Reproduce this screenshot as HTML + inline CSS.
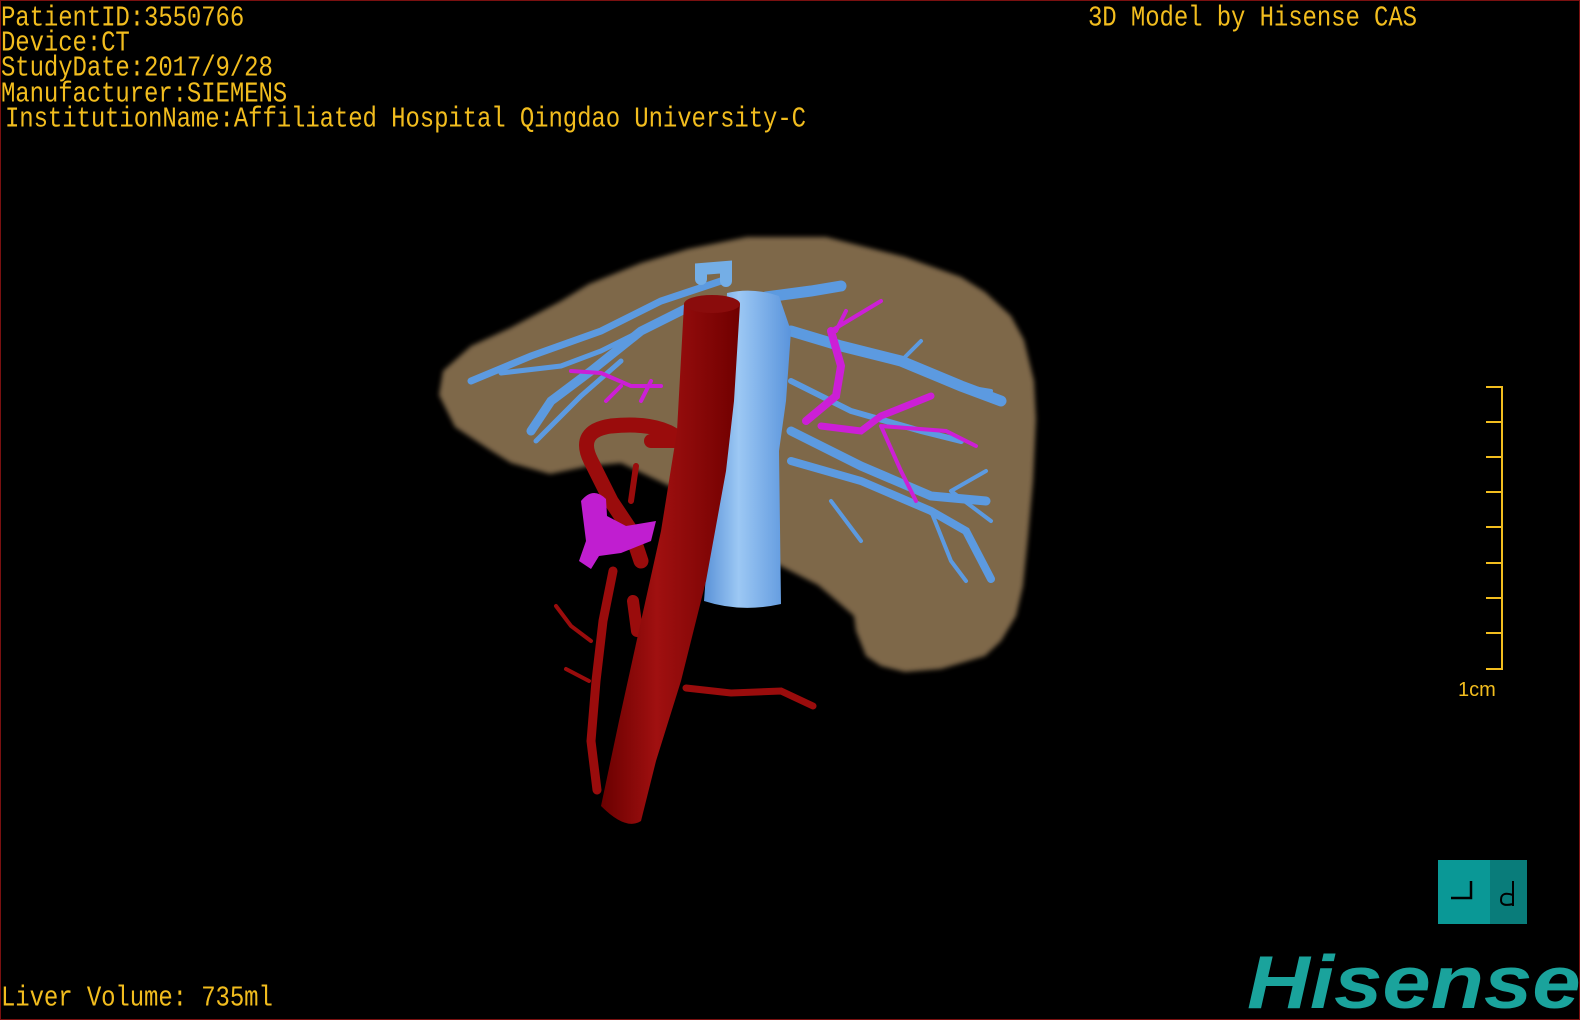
<!DOCTYPE html>
<html><head><meta charset="utf-8"><style>
html,body{margin:0;padding:0;background:#000;}
#c{position:relative;width:1580px;height:1020px;background:#000;overflow:hidden;box-sizing:border-box;border:1px solid #7a1010;}
.t{position:absolute;font-family:"Liberation Mono",monospace;font-size:24px;color:#f2bd1e;white-space:pre;line-height:24px;transform-origin:0 0;transform:scaleY(1.2);letter-spacing:-0.1px;}
</style></head><body><div id="c">
<div class="t" style="left:0;top:4px">PatientID:3550766</div>
<div class="t" style="left:0;top:29px">Device:CT</div>
<div class="t" style="left:0;top:54px">StudyDate:2017/9/28</div>
<div class="t" style="left:0;top:80px">Manufacturer:SIEMENS</div>
<div class="t" style="left:4px;top:105px">InstitutionName:Affiliated Hospital Qingdao University-C</div>
<div class="t" style="left:1087px;top:4px">3D Model by Hisense CAS</div>
<div class="t" style="left:0;top:984px">Liver Volume: 735ml</div>

<svg width="1580" height="1020" style="position:absolute;left:0;top:0">
<defs>
<linearGradient id="ao" x1="0" x2="1" y1="0" y2="0"><stop offset="0" stop-color="#6a0000"/><stop offset=".4" stop-color="#a01010"/><stop offset="1" stop-color="#700000"/></linearGradient>
<linearGradient id="iv" x1="0" x2="1"><stop offset="0" stop-color="#5a92d8"/><stop offset=".4" stop-color="#9cc8f4"/><stop offset="1" stop-color="#5a94dc"/></linearGradient>
<filter id="bl"><feGaussianBlur stdDeviation="2.5"/></filter>
</defs>
<!-- liver -->
<path filter="url(#bl)" d="M438,394 L442,370 L470,345 L509,327 L560,300 L588,283 L640,262 L687,248 L746,236 L825,236 L904,256 L960,276 L984,291 L1010,315 L1023,339 L1033,380 L1035,418 L1032,480 L1027,536 L1022,585 L1015,615 L1000,640 L984,655 L940,668 L904,671 L880,665 L865,655 L855,630 L853,615 L830,595 L817,584 L770,560 L700,500 L620,462 L588,465 L549,473 L510,462 L489,449 L454,426 Z" fill="#7e6748"/>
<!-- hepatic veins -->
<g stroke="#5c9ae0" fill="none" stroke-linecap="round">
<path d="M720,280 L660,300 L600,330 L530,355 L470,380" stroke-width="7"/>
<path d="M700,300 L640,330 L590,370 L550,400 L530,430" stroke-width="9"/>
<path d="M660,320 L600,350 L560,365 L500,372" stroke-width="5"/>
<path d="M620,360 L580,395 L545,430 L535,440" stroke-width="5"/>
<path d="M765,296 L810,290 L840,285" stroke-width="11"/>
<path d="M790,330 L840,345 L900,360 L960,385 L1000,400" stroke-width="11"/>
<path d="M900,360 L920,340 M960,385 L990,390" stroke-width="4"/>
<path d="M790,380 L850,410 L920,430 L960,440" stroke-width="6"/>
<path d="M790,430 L860,465 L930,495 L985,500" stroke-width="9"/>
<path d="M790,460 L860,480 L930,510 L965,530 L990,578" stroke-width="8"/>
<path d="M830,500 L860,540 M930,510 L950,560 L965,580" stroke-width="4"/>
<path d="M950,490 L985,470 M950,490 L990,520" stroke-width="4"/>
<path d="M700,278 L700,268 L725,266 L725,280" stroke-width="12" stroke="#74aee6"/>
</g>
<!-- portal magenta -->
<g stroke="#cc1fd6" fill="none" stroke-linecap="round">
<path d="M805,420 L835,395 L840,365 L830,330" stroke-width="8"/>
<path d="M830,330 L880,300 M835,330 L845,310" stroke-width="4"/>
<path d="M820,425 L860,430 L880,415 L930,395" stroke-width="7"/>
<path d="M880,425 L900,470 L915,500 M880,425 L945,430 L975,445" stroke-width="4"/>
<path d="M660,385 L630,385 L600,372 L570,370" stroke-width="4"/>
<path d="M650,380 L640,400 M620,385 L605,400" stroke-width="4"/>
</g>
<!-- IVC -->
<path d="M726,292 Q752,286 778,295 L790,330 L785,400 L778,450 L780,603 Q740,612 703,600 L712,480 L722,380 Z" fill="url(#iv)"/>
<!-- red small vessels -->
<g stroke="#9a0c0c" fill="none" stroke-linecap="round">
<path d="M685,687 L730,692 L780,690 L812,705" stroke-width="7"/>
<path d="M612,570 L602,620 L595,680 L590,740 L596,789" stroke-width="9"/>
<path d="M590,640 L570,625 L555,605 M588,680 L565,668" stroke-width="4"/>
<path d="M680,440 Q660,420 610,425 Q575,430 590,460 L610,500 L630,530 L640,560" stroke-width="15"/>
<path d="M650,440 L678,440" stroke-width="14"/>
<path d="M635,465 L630,500" stroke-width="6"/>
<path d="M632,600 L636,630" stroke-width="12"/>
</g>
<!-- magenta portal stub -->
<path d="M580,500 Q592,485 605,498 L606,515 L625,525 L655,520 L650,540 L620,552 L598,555 L590,568 L578,560 L585,540 Z" fill="#c01ed0"/>
<!-- aorta -->
<path d="M683,303 Q711,292 739,303 L733,400 L725,470 L705,580 L680,680 L655,760 L640,820 Q625,830 600,805 L618,720 L640,620 L660,530 L676,430 Z" fill="url(#ao)"/>
<ellipse cx="711" cy="303" rx="28" ry="9" fill="#8a0c0c"/>
<!-- scale bar -->
<g stroke="#f2bd1e" stroke-width="2" fill="none">
<path d="M1485,386 H1501 V668 H1485"/>
<path d="M1485,421 H1501 M1485,456 H1501 M1485,491 H1501 M1485,526 H1501 M1485,562 H1501 M1485,597 H1501 M1485,632 H1501"/>
</g>
<text x="1457" y="695" font-family="Liberation Sans,sans-serif" font-size="20" fill="#f2bd1e">1cm</text>
<!-- logo -->
<rect x="1437" y="859" width="52" height="64" fill="#0a9896"/>
<rect x="1489" y="859" width="37" height="64" fill="#097c7a"/>
<path d="M1450,897 H1470 V880" stroke="#000" stroke-width="2.5" fill="none"/>
<path d="M1512,880 V905 M1512,894 Q1500,890 1500,899 Q1500,906 1512,903" stroke="#000" stroke-width="2" fill="none"/>
<text x="0" y="0" transform="translate(1246,1007) scale(1.16,1)" font-family="Liberation Sans,sans-serif" font-weight="bold" font-style="italic" font-size="75" fill="#1aa39c">Hisense</text>
</svg>
</div></body></html>
